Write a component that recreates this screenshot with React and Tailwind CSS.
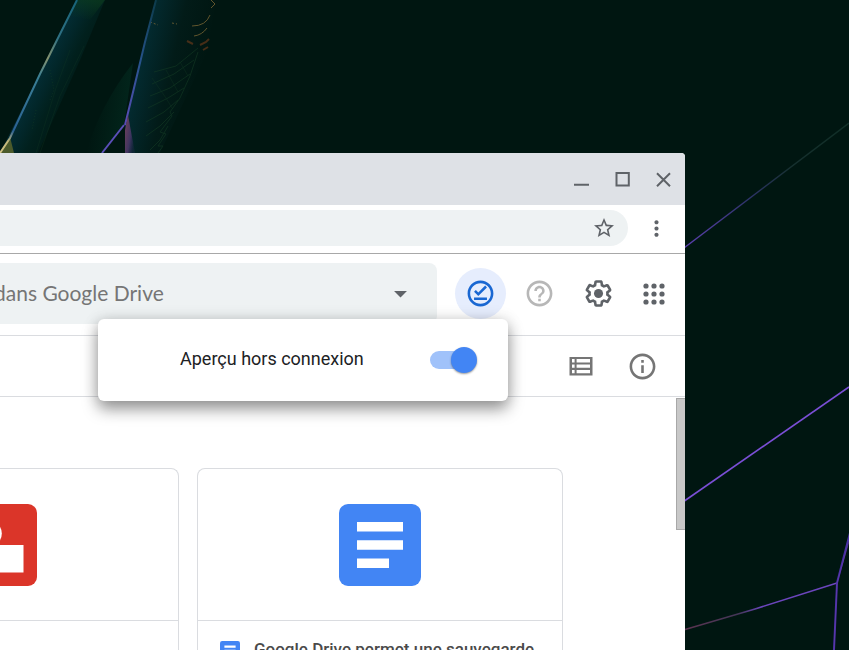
import { useState } from "react";
import {
  MdArrowDropDown,
  MdHelpOutline,
  MdInfoOutline,
  MdMoreVert,
  MdOutlineOfflinePin,
  MdStarBorder,
} from "react-icons/md";

function Wallpaper() {
  return (
    <svg
      className="absolute inset-0 h-full w-full"
      viewBox="0 0 849 650"
      preserveAspectRatio="xMinYMin slice"
      fill="none"
      aria-hidden="true"
    >
      <defs>
        <linearGradient id="leafLeft" gradientUnits="userSpaceOnUse" x1="40" y1="74" x2="90" y2="99">
          <stop offset="0" stopColor="#032c34" />
          <stop offset="0.4" stopColor="#01201d" />
          <stop offset="1" stopColor="#001611" />
        </linearGradient>
        <linearGradient id="leafRight" gradientUnits="userSpaceOnUse" x1="136" y1="75" x2="200" y2="90">
          <stop offset="0" stopColor="#032b31" />
          <stop offset="0.5" stopColor="#021b18" />
          <stop offset="1" stopColor="#001611" />
        </linearGradient>
        <linearGradient id="tipGreen" gradientUnits="userSpaceOnUse" x1="88" y1="0" x2="84" y2="20">
          <stop offset="0" stopColor="#0b3b1e" stopOpacity="0.7" />
          <stop offset="1" stopColor="#0b3b1e" stopOpacity="0" />
        </linearGradient>
        <linearGradient id="veil" gradientUnits="userSpaceOnUse" x1="90" y1="120" x2="130" y2="125">
          <stop offset="0" stopColor="#001611" />
          <stop offset="1" stopColor="#02261c" />
        </linearGradient>
        <linearGradient id="edgeLeft" gradientUnits="userSpaceOnUse" x1="77" y1="0" x2="0" y2="153">
          <stop offset="0" stopColor="#17637a" />
          <stop offset="0.25" stopColor="#2f7183" />
          <stop offset="0.38" stopColor="#85926f" />
          <stop offset="0.5" stopColor="#3a7f94" />
          <stop offset="0.85" stopColor="#2b6194" />
          <stop offset="0.92" stopColor="#c3b679" />
          <stop offset="1" stopColor="#cfc183" />
        </linearGradient>
        <linearGradient id="edgeRight" gradientUnits="userSpaceOnUse" x1="156" y1="0" x2="125" y2="125">
          <stop offset="0" stopColor="#0c3b4b" />
          <stop offset="0.5" stopColor="#27538c" />
          <stop offset="1" stopColor="#5a4bb8" />
        </linearGradient>
        <linearGradient id="rayTop" gradientUnits="userSpaceOnUse" x1="685" y1="248" x2="849" y2="123">
          <stop offset="0" stopColor="#5c3fb0" />
          <stop offset="0.4" stopColor="#2d3368" />
          <stop offset="0.65" stopColor="#16302f" />
          <stop offset="1" stopColor="#102e26" />
        </linearGradient>
        <linearGradient id="rayLow" gradientUnits="userSpaceOnUse" x1="685" y1="630" x2="837" y2="583">
          <stop offset="0" stopColor="#5b3350" />
          <stop offset="0.35" stopColor="#433657" />
          <stop offset="0.5" stopColor="#6b45bd" />
          <stop offset="1" stopColor="#6b45bd" />
        </linearGradient>
        <linearGradient id="stem" gradientUnits="userSpaceOnUse" x1="124" y1="130" x2="136" y2="132">
          <stop offset="0" stopColor="#6b3f5c" />
          <stop offset="0.6" stopColor="#3f3560" />
          <stop offset="1" stopColor="#2b2a55" stopOpacity="0.3" />
        </linearGradient>
      </defs>

      <rect width="849" height="650" fill="#001611" />

      <path d="M77 0 L105 0 L80 60 L38 153 L0 153 Z" fill="url(#leafLeft)" />
      <path d="M77 0 L105 0 L90 20 L69 16 Z" fill="url(#tipGreen)" />
      <path d="M133 63 L124 125 L102 153 L86 153 Q100 105 133 63 Z" fill="url(#veil)" />
      <path d="M156 0 L216 0 L208 50 L160 153 L130 153 L125 125 Z" fill="url(#leafRight)" />
      <path d="M0 153 L10 137 L14 153 Z" fill="#4b5a2b" />

      <g stroke="#164026" strokeWidth="1" opacity="0.5">
        <path d="M154 72 L176 66 L198 48" />
        <path d="M152 84 L174 74 L194 60" />
        <path d="M150 96 L170 88 L190 74" />
        <path d="M148 108 L168 98 L184 88" />
        <path d="M146 122 L164 112 L178 100" />
        <path d="M146 136 L160 126 L174 112" />
        <path d="M150 150 L160 140 L168 126" />
        <path d="M152 78 L166 98 L172 108 M166 70 L178 92 M180 62 L188 76" opacity="0.6" />
        <path d="M198 52 L190 76 L180 98 L170 112 L172 116 L160 132 L166 134 L158 146 L163 146 L158 153" />
        <path d="M70 50 L56 88 L36 153 M84 46 L60 96 L40 153" opacity="0.5" />
        <path d="M50 70 L54 90 L50 100 M36 110 L32 130" strokeDasharray="1 2" />
      </g>
      <g stroke="#8a7038" strokeWidth="1" opacity="0.7">
        <path d="M211 0 L215 4 L211 8" />
        <path d="M192 26 Q206 26 210 15" />
        <path d="M194 36 Q202 35 207 28" />
        <path d="M150 22 L158 25 M172 23 L177 24" strokeDasharray="2 2" />
      </g>
      <g stroke="#8c431b" strokeWidth="2" opacity="0.5">
        <path d="M187 41 L193 44 M200 45 L206 42 L209 39 M203 50 L208 47" />
      </g>

      <path d="M77 0 L40 74 L10 138 L0 153" stroke="url(#edgeLeft)" strokeWidth="2" />
      <path d="M156 0 L145 42 L134 88 L125 125" stroke="url(#edgeRight)" strokeWidth="2" />
      <path d="M124 125 L102 153" stroke="#5b4fb9" strokeWidth="2" />
      <path d="M128 115 L125 130 L125 153 L135 153 Z" fill="url(#stem)" />

      <path d="M680 251 L849 123" stroke="url(#rayTop)" strokeWidth="1.5" />
      <path d="M680 504 L849 387" stroke="#7a4fd6" strokeWidth="1.6" />
      <path d="M680 631 L755 609 L837 583" stroke="url(#rayLow)" strokeWidth="1.5" />
      <path d="M850 533 L837 583 L834 650" stroke="#4730a3" strokeWidth="2" />
      <path d="M850 538 L837 583 L834 650" stroke="#6a3fb0" strokeWidth="1" opacity="0.6" />
    </svg>
  );
}

function GearIcon() {
  return (
    <svg width="31" height="31" viewBox="0 0 24 24" fill="currentColor">
      <path d="M13.85 22.25h-3.7c-.74 0-1.36-.54-1.45-1.27l-.27-1.89c-.27-.14-.53-.29-.79-.46l-1.8.72c-.7.26-1.47-.03-1.81-.65L2.2 15.53c-.35-.66-.2-1.44.36-1.88l1.53-1.19c-.01-.15-.02-.3-.02-.46 0-.15.01-.31.02-.46l-1.52-1.19c-.59-.45-.74-1.26-.37-1.88l1.85-3.19c.34-.62 1.11-.9 1.79-.63l1.81.73c.26-.17.52-.32.78-.46l.27-1.91c.09-.7.71-1.25 1.44-1.25h3.7c.74 0 1.36.54 1.45 1.27l.27 1.89c.27.14.53.29.79.46l1.8-.72c.71-.26 1.48.03 1.82.65l1.84 3.18c.36.66.2 1.44-.36 1.88l-1.52 1.19c.01.15.02.3.02.46s-.01.31-.02.46l1.52 1.19c.56.45.72 1.23.37 1.86l-1.86 3.22c-.34.62-1.11.9-1.8.63l-1.8-.72c-.26.17-.52.32-.78.46l-.27 1.91c-.1.68-.72 1.22-1.46 1.22zm-3.23-2h2.76l.37-2.55.53-.22c.44-.18.88-.44 1.34-.78l.45-.34 2.38.96 1.38-2.4-2.03-1.58.07-.56c.03-.26.06-.51.06-.78s-.03-.53-.06-.78l-.07-.56 2.03-1.58-1.39-2.4-2.39.96-.45-.35c-.42-.32-.87-.58-1.33-.77l-.52-.22-.37-2.55h-2.76l-.37 2.55-.53.21c-.44.19-.88.44-1.34.79l-.45.33-2.38-.95-1.39 2.39 2.03 1.58-.07.56a7 7 0 0 0-.06.79c0 .26.02.53.06.78l.07.56-2.03 1.58 1.38 2.4 2.39-.96.45.35c.43.33.86.58 1.33.77l.53.22.38 2.55z" />
      <circle cx="12" cy="12" r="3.5" />
    </svg>
  );
}

function AppsIcon() {
  const steps = [3, 11, 19];
  return (
    <svg width="22" height="22" viewBox="0 0 22 22" fill="currentColor">
      {steps.map((y) => steps.map((x) => <circle key={`${x}-${y}`} cx={x} cy={y} r="2.6" />))}
    </svg>
  );
}

function ListIcon() {
  return (
    <svg width="24" height="24" viewBox="0 0 24 24">
      <path
        fill="currentColor"
        fillRule="evenodd"
        d="M.5 3h23v18.500H.5z M3 5v3.500h2.600V5z M3 10.600v3.200h2.600v-3.200z M3 16v3.200h2.600V16z M7.600 5v3.500H21V5z M7.600 10.600v3.200H21v-3.200z M7.600 16v3.200H21V16z"
      />
    </svg>
  );
}

function DocIcon({ className }) {
  return (
    <svg className={className} viewBox="0 0 82 82">
      <rect width="82" height="82" rx="9" fill="#4285f4" />
      <path d="M18 18h46v9.500H18z M18 36.200h46v9.500H18z M18 54.500h32v9.500H18z" fill="#fff" />
    </svg>
  );
}

function DrawingIcon({ className }) {
  return (
    <svg className={className} viewBox="0 0 82 82">
      <rect width="82" height="82" rx="9" fill="#db3529" />
      <circle cx="33.500" cy="29.500" r="13.300" fill="#fff" />
      <path d="M32 41h36.500v27.500H32z" fill="#fff" />
    </svg>
  );
}

function TitleBar() {
  return (
    <div className="flex h-13 items-center justify-end bg-[#dee1e6] pr-0.5 text-[#5f6368]">
      <button aria-label="Réduire" className="flex w-[41px] justify-center">
        <svg width="16" height="16" viewBox="0 0 16 16">
          <path d="M1 13.800h15" stroke="currentColor" strokeWidth="2" />
        </svg>
      </button>
      <button aria-label="Agrandir" className="flex w-[41px] justify-center">
        <svg width="16" height="16" viewBox="0 0 16 16" fill="none">
          <rect x="2.500" y="2" width="12.300" height="12.500" stroke="currentColor" strokeWidth="2" />
        </svg>
      </button>
      <button aria-label="Fermer" className="flex w-[41px] justify-center">
        <svg width="16" height="16" viewBox="0 0 16 16">
          <path d="M2 2.200l13 13M15 2.200l-13 13" stroke="currentColor" strokeWidth="2" />
        </svg>
      </button>
    </div>
  );
}

function AddressBar() {
  return (
    <div className="flex items-center border-b border-[#a8a8a8] pt-[5px] pb-[7px] text-[#5f6368]">
      <div className="flex h-9 flex-1 items-center justify-end rounded-r-full bg-[#eef2f3] pr-3">
        <button aria-label="Ajouter aux favoris">
          <MdStarBorder size={24} />
        </button>
      </div>
      <button aria-label="Menu" className="flex w-[57px] justify-center">
        <MdMoreVert size={25} />
      </button>
    </div>
  );
}

function OfflinePopup() {
  const [offline, setOffline] = useState(true);

  return (
    <div className="absolute top-[65px] right-[177px] z-10 flex h-[82px] w-[410px] items-center justify-between rounded-md bg-white pr-8 pl-[82px] shadow-[0_8px_16px_rgba(0,0,0,0.4),0_0_16px_rgba(0,0,0,0.12)]">
      <label htmlFor="offline" className="pb-0.5 text-lg text-[#202124]">
        Aperçu hors connexion
      </label>
      <input
        id="offline"
        type="checkbox"
        role="switch"
        checked={offline}
        onChange={(e) => setOffline(e.target.checked)}
        className="relative h-[18px] w-[46px] appearance-none rounded-full bg-gray-300 before:absolute before:-top-1 before:left-0 before:size-[26px] before:rounded-full before:bg-white before:shadow-[0_1px_2px_rgba(0,0,0,0.4)] checked:bg-[#a0c2fa] checked:before:left-[21px] checked:before:bg-[#4285f4]"
      />
    </div>
  );
}

function DriveHeader() {
  return (
    <header className="relative flex items-center gap-2 border-b border-[#dadce0] pt-[9px] pr-[9px] pb-[11px] text-[#5f6368]">
      <div className="mr-2.5 flex h-[61px] flex-1 items-center rounded-r-lg bg-[#eef2f3] pr-[21px]">
        <input
          type="text"
          aria-label="Rechercher"
          placeholder="dans Google Drive"
          className="-ml-1.5 min-w-0 flex-1 bg-transparent pb-0.5 font-['Lato',sans-serif] text-[21px] outline-none placeholder:text-[#757575]"
        />
        <button aria-label="Options de recherche">
          <MdArrowDropDown size={31} />
        </button>
      </div>
      <button
        aria-label="Hors connexion"
        className="flex size-[51px] items-center justify-center rounded-full bg-[#e6edfd] text-[#1967d2]"
      >
        <MdOutlineOfflinePin size={31} />
      </button>
      <button aria-label="Aide" className="flex size-[51px] items-center justify-center text-[#b7b7b7]">
        <MdHelpOutline size={31} />
      </button>
      <button aria-label="Paramètres" className="flex size-[51px] items-center justify-center">
        <GearIcon />
      </button>
      <button aria-label="Applications" className="flex h-[51px] w-11 items-center justify-center">
        <AppsIcon />
      </button>
      <OfflinePopup />
    </header>
  );
}

function FileCard({ icon: Icon, title }) {
  return (
    <article className="w-[366px] shrink-0 rounded-t-lg border border-b-0 border-[#dadce0]">
      <div className="flex h-[152px] items-center justify-center border-b border-[#dadce0]">
        <Icon className="size-[82px]" />
      </div>
      <div className="flex items-start gap-3.5 px-[22px] pt-4">
        <Icon className="mt-1 size-5 shrink-0" />
        {title && <h2 className="text-[17px] leading-6 font-medium text-[#4a4a4a]">{title}</h2>}
      </div>
    </article>
  );
}

export default function App() {
  return (
    <div className="relative flex h-screen flex-col overflow-hidden bg-[#001611] pt-[153px] pr-41 font-['Roboto',sans-serif]">
      <Wallpaper />
      <main className="relative flex min-h-0 flex-1 flex-col overflow-hidden rounded-tr-sm bg-white">
        <TitleBar />
        <AddressBar />
        <DriveHeader />
        <div className="flex h-[61px] shrink-0 items-center justify-end gap-[34px] border-b border-[#dadce0] pr-[27px] text-[#757575]">
          <button aria-label="Affichage en liste">
            <ListIcon />
          </button>
          <button aria-label="Afficher les détails">
            <MdInfoOutline size={31} />
          </button>
        </div>
        <div className="flex min-h-0 flex-1 justify-end">
          <div className="flex justify-end gap-[18px] pt-[71px] pr-[113px]">
            <FileCard icon={DrawingIcon} />
            <FileCard icon={DocIcon} title="Google Drive permet une sauvegarde" />
          </div>
          <div className="mt-px h-[132px] w-[9px] shrink-0 border border-r-0 border-[#a8a8a8] bg-[#c8c8c8]" />
        </div>
      </main>
    </div>
  );
}
